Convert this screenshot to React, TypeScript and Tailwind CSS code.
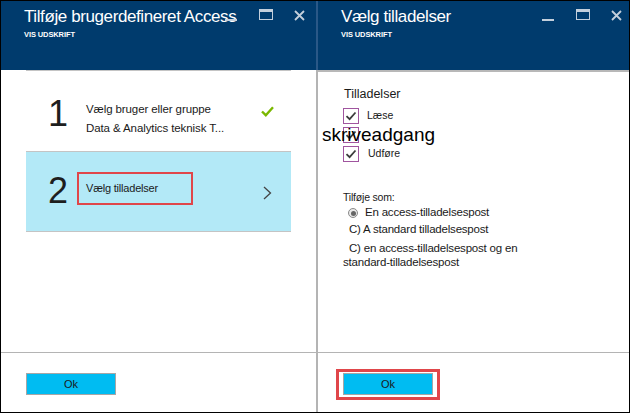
import React from "react";

function HeaderIcons() {
  return (
    <div className="absolute left-[224px] top-[8px] flex items-start">
      <div className="mt-[10px] h-[2px] w-[12px] bg-[#c3cfdc]" />
      <div className="ml-[22px] h-[11px] w-[14px] border-[1.5px] border-t-[3px] border-[#c3cfdc]" />
      <svg className="ml-[21px] mt-[1px]" width="11" height="11" viewBox="0 0 11 11">
        <path d="M1 1 L10 10 M10 1 L1 10" stroke="#c3cfdc" strokeWidth="1.8" fill="none" />
      </svg>
    </div>
  );
}

function Header({ title }: { title: string }) {
  return (
    <div className="relative h-[69px] bg-[#003b6d] pl-[23px] pt-[6px] text-white">
      <div className="text-[17px] leading-[20px] tracking-[-0.4px] whitespace-nowrap">{title}</div>
      <div className="mt-[3px] text-[7.5px] leading-[10px] font-semibold tracking-[-0.1px]">VIS UDSKRIFT</div>
      <HeaderIcons />
    </div>
  );
}

function CheckBox() {
  return (
    <div className="flex h-[16px] w-[16px] items-center justify-center border-[1.5px] border-[#a0559f] bg-white">
      <svg width="12" height="12" viewBox="0 0 12 12">
        <path d="M1.5 6.2 L4.6 9.2 L10.5 2.5" stroke="#3c3c3c" strokeWidth="1.8" fill="none" />
      </svg>
    </div>
  );
}

export default function App() {
  return (
    <div className="flex h-[413px] w-[630px] overflow-hidden border border-black bg-white font-['Liberation_Sans',Arial,sans-serif] text-[#1a1a1a]">
      {/* Left panel */}
      <div className="flex w-[315px] flex-col">
        <Header title="Tilføje brugerdefineret Access" />
        <div className="h-[282px]">
          <div className="mx-[25px] border-t border-[#c4c4c4]">
            <div className="flex h-[80px] items-start">
              <div className="ml-[22px] mt-[25px] w-[30px] text-[36px] leading-[36px] text-[#1e1e1e]">1</div>
              <div className="ml-[8px] mt-[29px] text-[11.5px] leading-[19px] tracking-[-0.1px]">
                <div>Vælg bruger eller gruppe</div>
                <div>Data &amp; Analytics teknisk T...</div>
              </div>
              <svg className="ml-auto mr-[17px] mt-[35px]" width="13" height="11" viewBox="0 0 13 11">
                <path d="M1 5.5 L4.8 9.2 L12 1.2" stroke="#7ab800" strokeWidth="2.4" fill="none" />
              </svg>
            </div>
            <div className="flex h-[81px] items-start border-y border-[#c4c4c4] bg-[#b3e9f7]">
              <div className="ml-[22px] mt-[21px] w-[29px] text-[36px] leading-[36px] text-[#1e1e1e]">2</div>
              <div className="mt-[20px] flex h-[33px] w-[116px] items-center border-2 border-[#e0464a] pl-[7px] text-[11px] tracking-[-0.2px]">
                Vælg tilladelser
              </div>
              <svg className="ml-auto mr-[19px] mt-[34px]" width="9" height="14" viewBox="0 0 9 14">
                <path d="M1 1 L7.5 7 L1 13" stroke="#444" strokeWidth="1.3" fill="none" />
              </svg>
            </div>
          </div>
        </div>
        <div className="h-[60px] border-t border-[#b4b4b4] pl-[25px] pt-[20px]">
          <div className="flex h-[22px] w-[90px] items-center justify-center border border-[#a6a6a6] bg-[#00bcf2] text-[11px]">
            Ok
          </div>
        </div>
      </div>

      {/* Divider */}
      <div className="flex w-[2px] flex-col">
        <div className="h-[69px] bg-[#2a5887]" />
        <div className="flex-1 bg-[#b4b4b4]" />
      </div>

      {/* Right panel */}
      <div className="flex w-[311px] flex-col">
        <Header title="Vælg tilladelser" />
        <div className="h-[282px] border-t-2 border-[#b8b8b8] pl-[25px]">
          <div className="mt-[14px] pl-[1px] text-[12.5px] leading-[16px]">Tilladelser</div>
          <div className="mt-[6px] flex flex-col gap-[3px]">
            <div className="flex h-[16px] items-center">
              <CheckBox />
              <span className="ml-[8px] text-[10.5px]">Læse</span>
            </div>
            <div className="relative flex h-[16px] items-center">
              <CheckBox />
              <span className="absolute left-[-21px] top-[-3px] text-[19px] leading-[22px] text-black">skriveadgang</span>
            </div>
            <div className="flex h-[16px] items-center">
              <CheckBox />
              <span className="ml-[9px] text-[10.5px]">Udføre</span>
            </div>
          </div>
          <div className="mt-[28px] text-[10.5px] leading-[14px] tracking-[-0.2px]">Tilføje som:</div>
          <div className="mt-[2px] flex h-[14px] items-center pl-[5px] text-[11.5px] tracking-[-0.2px]">
            <div className="flex h-[10px] w-[10px] items-center justify-center rounded-full border border-[#8a8a8a] bg-[#e8e8e8]">
              <div className="h-[5px] w-[5px] rounded-full bg-[#666]" />
            </div>
            <span className="ml-[7px]">En access-tilladelsespost</span>
          </div>
          <div className="mt-[2px] h-[14px] pl-[6px] text-[11.5px] leading-[14px] tracking-[-0.2px]">C) A standard tilladelsespost</div>
          <div className="mt-[5px] text-[11.5px] leading-[14px] tracking-[-0.2px]">
            <div className="pl-[6px]">C) en access-tilladelsespost og en</div>
            <div>standard-tilladelsespost</div>
          </div>
        </div>
        <div className="h-[60px] border-t border-[#b4b4b4] pl-[18px] pt-[16px]">
          <div className="inline-block border-[3px] border-[#e0464a] px-[4px] pb-[2px] pt-[1px]">
            <div className="flex h-[22px] w-[90px] items-center justify-center border border-[#a6a6a6] bg-[#00bcf2] text-[11px]">
              Ok
            </div>
          </div>
        </div>
      </div>
    </div>
  );
}
